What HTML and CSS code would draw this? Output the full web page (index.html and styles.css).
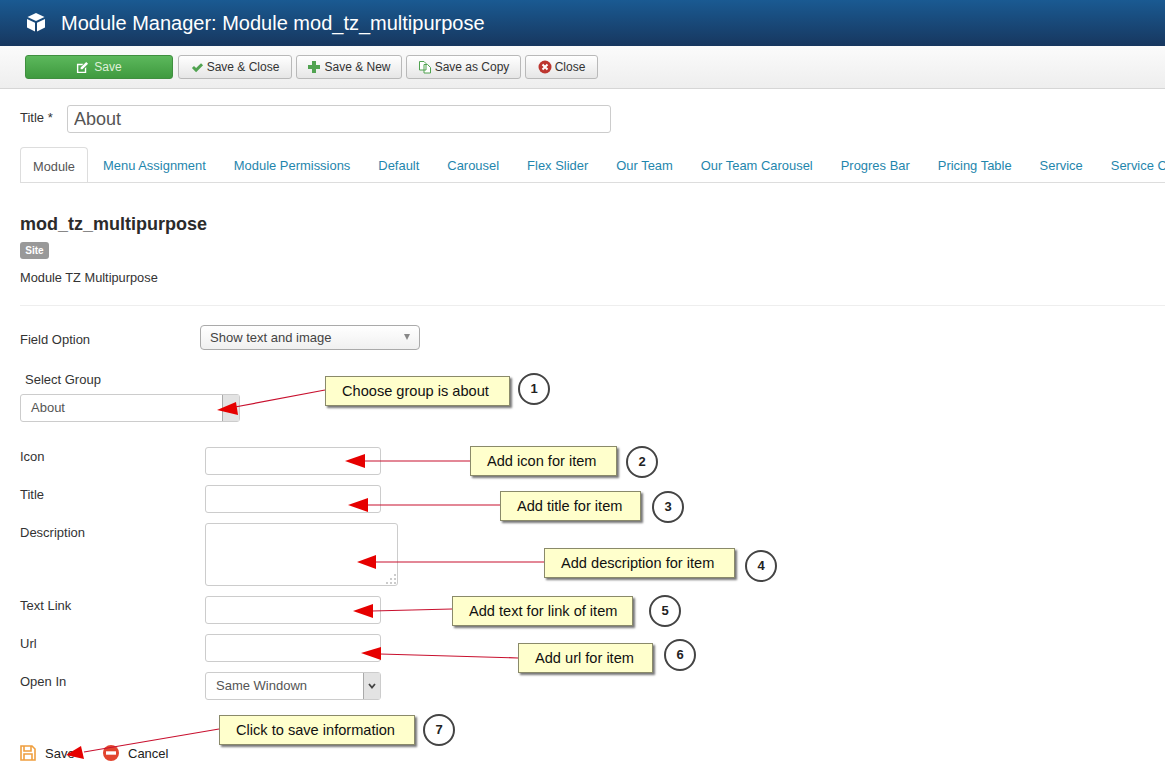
FILE: index.html
```html
<!DOCTYPE html>
<html lang="en">
<head>
    <meta charset="UTF-8">
    <title>Module Manager: Module mod_tz_multipurpose</title>
    <link rel="stylesheet" href="styles.css">
</head>
<body>
    <header class="topbar">
        <svg class="cube" viewBox="0 0 20 20" width="20" height="20">
            <path d="M10 1 L18.5 5 L10 9 L1.500 5 Z" fill="#fff"/>
            <path d="M1 7 L9 10.800 V19.500 L1 15.500 Z" fill="#fff"/>
            <path d="M19 7 L11 10.800 V19.500 L19 15.500 Z" fill="#fff"/>
        </svg>
        <h1>Module Manager: Module mod_tz_multipurpose</h1>
    </header>

    <div class="toolbar">
        <button class="btn btn-save">
            <svg viewBox="0 0 14 14" width="13" height="13"><path d="M1 3 H8 L6.500 4.500 H2.500 V11.500 H9.500 V8 L11 6.500 V13 H1 Z" fill="#fff"/><path d="M5 7 L11 1 L13 3 L7 9 H5 Z" fill="#fff"/></svg>
            Save
        </button>
        <button class="btn btn-close-save">
            <svg viewBox="0 0 14 14" width="13" height="13"><path d="M1 7.500 L3.200 5.300 L5.500 7.600 L10.800 2.300 L13 4.500 L5.500 12 Z" fill="#51a351"/></svg>
            Save &amp; Close
        </button>
        <button class="btn btn-new">
            <svg viewBox="0 0 14 14" width="14" height="14"><path d="M5 1 H9 V5 H13 V9 H9 V13 H5 V9 H1 V5 H5 Z" fill="#51a351"/></svg>
            Save &amp; New
        </button>
        <button class="btn btn-copy">
            <svg viewBox="0 0 14 14" width="14" height="14"><path d="M1.500 1.500 H6 L8 3.500 V10 H1.500 Z M6 4.500 H9.500 L12.500 7.500 V13 H6 Z" fill="#fff" stroke="#51a351"/></svg>
            Save as Copy
        </button>
        <button class="btn btn-cancel">
            <svg viewBox="0 0 14 14" width="14" height="14"><circle cx="7" cy="7" r="6.500" fill="#bd362f"/><path d="M4.500 4.500 L9.500 9.500 M9.500 4.500 L4.500 9.500" stroke="#fff" stroke-width="2"/></svg>
            Close
        </button>
    </div>

    <main class="content">
        <div class="title-row">
            <label class="title-label">Title *</label>
            <input class="title-input" type="text" value="About">
        </div>

        <ul class="tabs">
            <li class="tab active">Module</li>
            <li class="tab">Menu Assignment</li>
            <li class="tab">Module Permissions</li>
            <li class="tab">Default</li>
            <li class="tab">Carousel</li>
            <li class="tab">Flex Slider</li>
            <li class="tab">Our Team</li>
            <li class="tab">Our Team Carousel</li>
            <li class="tab">Progres Bar</li>
            <li class="tab">Pricing Table</li>
            <li class="tab">Service</li>
            <li class="tab">Service Carousel</li>
        </ul>

        <h2>mod_tz_multipurpose</h2>
        <span class="badge">Site</span>
        <p class="desc">Module TZ Multipurpose</p>
        <hr>

        <div class="option-row">
            <label>Field Option</label>
            <div class="fancy-select">
                <span>Show text and image</span>
                <i class="caret"></i>
            </div>
        </div>

        <div class="group-label">Select Group</div>
        <div class="native-select group-select">
            <span>About</span>
            <i class="native-arrow"></i>
        </div>

        <div class="fields">
            <div class="field">
                <label>Icon</label>
                <input type="text">
            </div>
            <div class="field">
                <label>Title</label>
                <input type="text">
            </div>
            <div class="field">
                <label>Description</label>
                <div class="area-wrap">
                    <textarea></textarea>
                    <svg class="grip" viewBox="0 0 12 12" width="12" height="12">
                        <path d="M9 1h2v2H9z M5 5h2v2H5z M9 5h2v2H9z M1 9h2v2H1z M5 9h2v2H5z M9 9h2v2H9z" fill="#ccc"/>
                    </svg>
                </div>
            </div>
            <div class="field">
                <label>Text Link</label>
                <input type="text">
            </div>
            <div class="field">
                <label>Url</label>
                <input type="text">
            </div>
            <div class="field">
                <label>Open In</label>
                <div class="native-select open-select">
                    <span>Same Windown</span>
                    <i class="native-arrow chevron">
                        <svg viewBox="0 0 8 6" width="8" height="6"><path d="M1 1 L4 4.500 L7 1" fill="none" stroke="#444" stroke-width="1.800"/></svg>
                    </i>
                </div>
            </div>
        </div>

        <div class="actions">
            <span class="action action-save">
                <svg viewBox="0 0 16 16" width="16" height="16"><path d="M1 1 H12 L15 4 V15 H1 Z M4 1 V6 H11 V1 M4 15 V9 H12 V15" fill="none" stroke="#ef9f3f" stroke-width="1.600"/></svg>
                Save
            </span>
            <span class="action action-cancel">
                <svg viewBox="0 0 16 16" width="16" height="16"><circle cx="8" cy="8" r="8" fill="#e2452f"/><rect x="3" y="6.300" width="10" height="3.400" fill="#fff"/></svg>
                Cancel
            </span>
        </div>
    </main>

    <!-- annotations over the screenshot -->
    <svg class="arrows" viewBox="0 0 1165 782" width="1165" height="782">
        <g stroke="#c8102e" stroke-width="1.200">
            <line x1="325" y1="390" x2="235" y2="407"/>
            <line x1="470" y1="461" x2="364" y2="461"/>
            <line x1="500" y1="505" x2="367" y2="505"/>
            <line x1="544" y1="562" x2="375" y2="562"/>
            <line x1="452" y1="609" x2="372" y2="611"/>
            <line x1="518" y1="658" x2="380" y2="654"/>
            <line x1="219" y1="729" x2="84" y2="752"/>
        </g>
        <g fill="#e60000">
            <polygon points="217,410 236,402 238,415"/>
            <polygon points="345,461 365,454 365,468"/>
            <polygon points="348,505 368,498 368,512"/>
            <polygon points="357,562 376,555 376,569"/>
            <polygon points="353,611 373,604 373,618"/>
            <polygon points="361,653 381,647 381,660"/>
            <polygon points="66,755 81,746 84,759"/>
        </g>
    </svg>

    <div class="note note-1">Choose group is about</div>
    <div class="note note-2">Add icon for item</div>
    <div class="note note-3">Add title for item</div>
    <div class="note note-4">Add description for item</div>
    <div class="note note-5">Add text for link of item</div>
    <div class="note note-6">Add url for item</div>
    <div class="note note-7">Click to save information</div>

    <div class="step step-1">1</div>
    <div class="step step-2">2</div>
    <div class="step step-3">3</div>
    <div class="step step-4">4</div>
    <div class="step step-5">5</div>
    <div class="step step-6">6</div>
    <div class="step step-7">7</div>
</body>
</html>
```

FILE: styles.css
```css
* {
    box-sizing: border-box;
}
html, body {
    height: 782px;
}
body {
    margin: 0;
    position: relative;
    overflow: hidden;
    font-family: "Liberation Sans", Arial, sans-serif;
    font-size: 13px;
    color: #333;
    background: #fff;
}

/* top bar */
.topbar {
    height: 46px;
    display: flex;
    align-items: center;
    padding-left: 26px;
    background: linear-gradient(to bottom, #1a5a92, #17375f);
}
.cube {
    margin-top: -2px;
}
.topbar h1 {
    margin: 0 0 0 15px;
    font-size: 20px;
    font-weight: normal;
    color: #fff;
}

/* toolbar */
.toolbar {
    height: 43px;
    display: flex;
    align-items: flex-start;
    gap: 4px;
    padding: 9px 0 0 25px;
    background: linear-gradient(to bottom, #fbfbfb, #eeeeee);
    border-bottom: 1px solid #d6d6d6;
}
.btn {
    height: 24px;
    display: flex;
    align-items: center;
    justify-content: center;
    gap: 3px;
    padding: 0;
    font-family: inherit;
    font-size: 12px;
    color: #333;
    background: linear-gradient(to bottom, #ffffff, #e6e6e6);
    border: 1px solid #b9b9b9;
    border-radius: 3px;
}
.btn-save {
    width: 148px;
    margin-right: 1px;
    gap: 5px;
    color: #dff0d8;
    background: linear-gradient(to bottom, #5cb85c, #3f9a3f);
    border-color: #3f8f3f;
}
.btn-close-save {
    width: 114px;
}
.btn-new {
    width: 106px;
}
.btn-copy {
    width: 115px;
}
.btn-cancel {
    width: 73px;
}

/* main form */
.content {
    padding: 16px 0 0 20px;
}
.title-row {
    display: flex;
    height: 28px;
}
.title-label {
    width: 47px;
    padding-top: 5px;
}
input, textarea {
    display: block;
    font-family: inherit;
    background: #fff;
    border: 1px solid #ccc;
    border-radius: 3px;
}
.title-input {
    width: 544px;
    height: 28px;
    padding: 1px 6px 0;
    font-size: 18px;
    color: #555;
}
.tabs {
    display: flex;
    height: 36px;
    margin: 14px 0 0;
    padding: 0;
    list-style: none;
    white-space: nowrap;
    overflow: hidden;
    border-bottom: 1px solid #ddd;
}
.tab {
    flex-shrink: 0;
    padding: 11px 13px 0;
    margin-right: 2px;
    font-size: 12.950px;
    color: #1f86ad;
}
.tab.active {
    width: 68px;
    height: 36px;
    padding: 11px 0 0 12px;
    margin-right: 2px;
    font-size: 12.800px;
    color: #555;
    background: #fff;
    border: 1px solid #ddd;
    border-bottom-color: #fff;
    border-radius: 4px 4px 0 0;
}
h2 {
    margin: 31px 0 0;
    font-size: 18px;
    line-height: 20px;
    color: #2b2b2b;
}
.badge {
    display: block;
    width: 29px;
    height: 17px;
    margin-top: 8px;
    text-align: center;
    font-size: 10px;
    font-weight: bold;
    line-height: 17px;
    color: #fff;
    background: #999;
    border-radius: 3px;
}
.desc {
    margin: 10px 0 0;
    line-height: 18px;
    font-size: 12.800px;
}
hr {
    height: 1px;
    margin: 18px 0 0;
    border: 0;
    background: #eee;
}
.option-row {
    display: flex;
    margin-top: 19px;
}
.option-row label {
    width: 180px;
    padding-top: 7px;
}
.fancy-select {
    position: relative;
    width: 220px;
    height: 25px;
    padding-left: 9px;
    line-height: 24px;
    color: #444;
    background: linear-gradient(to bottom, #fff, #f0f0f0);
    border: 1px solid #aaa;
    border-radius: 4px;
}
.caret {
    position: absolute;
    top: 8px;
    right: 9px;
    border-top: 6px solid #888;
    border-left: 3px solid transparent;
    border-right: 3px solid transparent;
}
.group-label {
    margin: 21px 0 0 5px;
    line-height: 18px;
}
.native-select {
    position: relative;
    height: 28px;
    padding-left: 10px;
    line-height: 26px;
    color: #555;
    background: #fff;
    border: 1px solid #ccc;
    border-radius: 3px;
}
.group-select {
    width: 220px;
    margin-top: 5px;
}
.open-select {
    width: 176px;
}
.native-arrow {
    position: absolute;
    top: 0;
    right: 0;
    bottom: 0;
    width: 17px;
    display: flex;
    align-items: center;
    justify-content: center;
    background: #e3e3e3;
    border-left: 1px solid #aaa;
}
.fields {
    display: flex;
    flex-direction: column;
    gap: 10px;
    margin-top: 25px;
}
.field {
    display: flex;
}
.field label {
    width: 185px;
    padding-top: 2px;
}
.field input {
    width: 176px;
    height: 28px;
}
.area-wrap {
    position: relative;
    width: 193px;
    height: 63px;
}
.area-wrap textarea {
    width: 193px;
    height: 63px;
    resize: none;
}
.grip {
    position: absolute;
    right: 1px;
    bottom: 1px;
}
.actions {
    display: flex;
    margin-top: 45px;
}
.action {
    display: flex;
    align-items: center;
    color: #222;
}
.action svg {
    margin-right: 9px;
}
.action-save {
    width: 83px;
}

/* annotations */
.arrows {
    position: absolute;
    top: 0;
    left: 0;
}
.note {
    position: absolute;
    height: 30px;
    padding-left: 16px;
    font-size: 14.600px;
    line-height: 28px;
    color: #111;
    background: #ffffcc;
    border: 1px solid #8a8a6a;
    box-shadow: 2px 2px 2px #777;
}
.note-1 { left: 325px; top: 376px; width: 185px; }
.note-2 { left: 470px; top: 446px; width: 147px; }
.note-3 { left: 500px; top: 491px; width: 141px; }
.note-4 { left: 544px; top: 548px; width: 191px; }
.note-5 { left: 452px; top: 596px; width: 181px; }
.note-6 { left: 518px; top: 643px; width: 135px; }
.note-7 { left: 219px; top: 715px; width: 196px; }
.step {
    position: absolute;
    width: 32px;
    height: 32px;
    text-align: center;
    font-size: 13px;
    font-weight: bold;
    line-height: 28px;
    color: #222;
    background: #fff;
    border: 2px solid #444;
    border-radius: 50%;
}
.step-1 { left: 518px; top: 373px; }
.step-2 { left: 626px; top: 446px; }
.step-3 { left: 652px; top: 491px; }
.step-4 { left: 745px; top: 550px; }
.step-5 { left: 649px; top: 595px; }
.step-6 { left: 664px; top: 639px; }
.step-7 { left: 423px; top: 714px; }
```
